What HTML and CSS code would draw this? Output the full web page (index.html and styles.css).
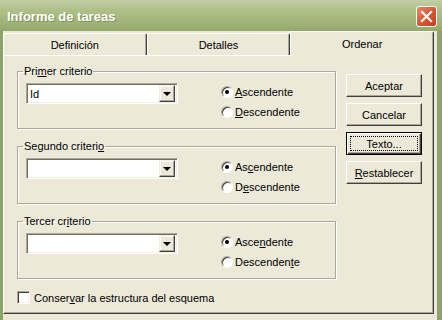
FILE: index.html
```html
<!DOCTYPE html>
<html lang="es">
<head>
  <meta charset="UTF-8" />
  <title>Informe de tareas</title>
  <link rel="stylesheet" href="styles.css">
</head>
<body>
  <div class="window">
    <div class="titlebar">
      <span class="title">Informe de tareas</span>
      <div class="close-btn">
        <svg width="13" height="13" viewBox="0 0 13 13">
          <path d="M2 2 L11 11 M11 2 L2 11" stroke="#fff" stroke-width="2.2" stroke-linecap="square"/>
        </svg>
      </div>
    </div>

    <div class="body">
      <div class="tabs">
        <div class="tab">Definición</div>
        <div class="tab">Detalles</div>
        <div class="tab active">Ordenar</div>
      </div>

      <div class="panel">
        <div class="criteria">
          <fieldset class="group">
            <legend>Pri<u>m</u>er criterio</legend>
            <div class="group-row">
              <div class="combo">
                <span class="combo-text">Id</span>
                <span class="combo-btn"><span class="arrow"></span></span>
              </div>
              <div class="radios">
                <div class="radio"><span class="radio-mark checked"></span><span><u>A</u>scendente</span></div>
                <div class="radio"><span class="radio-mark"></span><span><u>D</u>escendente</span></div>
              </div>
            </div>
          </fieldset>

          <fieldset class="group">
            <legend>Segundo criteri<u>o</u></legend>
            <div class="group-row">
              <div class="combo">
                <span class="combo-text"></span>
                <span class="combo-btn"><span class="arrow"></span></span>
              </div>
              <div class="radios">
                <div class="radio"><span class="radio-mark checked"></span><span>As<u>c</u>endente</span></div>
                <div class="radio"><span class="radio-mark"></span><span>D<u>e</u>scendente</span></div>
              </div>
            </div>
          </fieldset>

          <fieldset class="group">
            <legend>Tercer cr<u>i</u>terio</legend>
            <div class="group-row">
              <div class="combo">
                <span class="combo-text"></span>
                <span class="combo-btn"><span class="arrow"></span></span>
              </div>
              <div class="radios">
                <div class="radio"><span class="radio-mark checked"></span><span>Asce<u>n</u>dente</span></div>
                <div class="radio"><span class="radio-mark"></span><span>Descenden<u>t</u>e</span></div>
              </div>
            </div>
          </fieldset>

          <div class="check-row">
            <span class="checkbox"></span>
            <span>Conser<u>v</u>ar la estructura del esquema</span>
          </div>
        </div>

        <div class="buttons">
          <div class="btn">Aceptar</div>
          <div class="btn">Cancelar</div>
          <div class="btn default"><span class="focus">Texto...</span></div>
          <div class="btn"><u>R</u>establecer</div>
        </div>
      </div>
    </div>
  </div>
</body>
</html>
```

FILE: styles.css
```css
* {
  box-sizing: border-box;
}

body {
  margin: 0;
  font-family: "Liberation Sans", Arial, sans-serif;
  font-size: 11px;
  color: #000;
  background: #ece9d8;
}

.window {
  width: 442px;
  height: 320px;
  display: flex;
  flex-direction: column;
  overflow: hidden;
}

/* title bar */
.titlebar {
  height: 31px;
  flex-shrink: 0;
  display: flex;
  align-items: center;
  justify-content: space-between;
  padding: 0 5px 0 7px;
  background: linear-gradient(#c3cfa6 0%, #b0c08a 30%, #a2b47a 70%, #95a96c 100%);
}

.title {
  color: #fff;
  font-weight: bold;
  font-size: 13px;
  text-shadow: 1px 1px 0 #7d8f57;
  margin-top: 2px;
}

.close-btn {
  width: 21px;
  height: 21px;
  margin-top: 2px;
  border: 1px solid #fff;
  border-radius: 3px;
  background: linear-gradient(135deg, #e8866a, #d8532f 55%, #c4401f);
  display: flex;
  align-items: center;
  justify-content: center;
}

/* window body */
.body {
  flex: 1;
  background: #ece9d8;
  border-left: 3px solid #8ea36b;
  border-right: 5px solid #8ea36b;
  padding-right: 3px;
  display: flex;
  flex-direction: column;
}

.tabs {
  display: flex;
  height: 24px;
  align-items: flex-end;
  position: relative;
  z-index: 1;
}

.tab {
  flex: 1;
  height: 22px;
  text-align: center;
  padding-top: 5px;
  border-top: 1px solid #fff;
  border-left: 1px solid #fff;
  border-right: 1px solid #404040;
  box-shadow: inset -1px 0 0 #aca899;
  border-radius: 2px 2px 0 0;
}

.tab.active {
  height: 25px;
  margin-bottom: -1px;
  padding-top: 6px;
  background: #ece9d8;
}

.panel {
  height: 259px;
  display: flex;
  padding: 8px 0 0 13px;
  border: 1px solid;
  border-color: #fff #404040 #404040 #fff;
  box-shadow: inset -1px -1px 0 #aca899;
}

/* group boxes */
.criteria {
  width: 319px;
  display: flex;
  flex-direction: column;
  gap: 10px;
}

.group {
  margin: 0;
  padding: 4px 8px 5px;
  height: 65px;
  border: 1px solid #aca899;
  box-shadow: 1px 1px 0 #fff, inset 1px 1px 0 #fff;
}

.group legend {
  padding: 0 1px;
  margin-left: -3px;
  line-height: 14px;
}

.group-row {
  display: flex;
  align-items: flex-start;
}

.combo {
  width: 152px;
  height: 21px;
  margin-top: 1px;
  display: flex;
  align-items: center;
  background: #fff;
  border: 1px solid;
  border-color: #aca899 #fff #fff #aca899;
  box-shadow: inset 1px 1px 0 #716f64, inset -1px -1px 0 #f1efe2;
  padding: 0 2px 0 3px;
}

.combo-text {
  flex: 1;
}

.combo-btn {
  width: 16px;
  height: 17px;
  background: #ece9d8;
  border: 1px solid;
  border-color: #f1efe2 #404040 #404040 #f1efe2;
  box-shadow: inset -1px -1px 0 #aca899, inset 1px 1px 0 #fff;
  display: flex;
  align-items: center;
  justify-content: center;
}

.arrow {
  width: 0;
  height: 0;
  border-left: 4px solid transparent;
  border-right: 4px solid transparent;
  border-top: 4px solid #000;
  margin-top: 1px;
}

.radios {
  margin-left: 43px;
  display: flex;
  flex-direction: column;
}

.radio {
  height: 20px;
  display: flex;
  align-items: center;
  gap: 2px;
}

.radio-mark {
  width: 12px;
  height: 12px;
  border-radius: 50%;
  background: #fff;
  border: 1px solid;
  border-color: #aca899 #fff #fff #aca899;
  box-shadow: inset 1px 1px 0 #404040;
  display: flex;
  align-items: center;
  justify-content: center;
}

.radio-mark.checked::after {
  content: "";
  width: 4px;
  height: 4px;
  border-radius: 50%;
  background: #000;
}

.check-row {
  margin-top: 2px;
  display: flex;
  align-items: center;
  gap: 4px;
}

.checkbox {
  width: 13px;
  height: 13px;
  background: #fff;
  border: 1px solid;
  border-color: #aca899 #fff #fff #aca899;
  box-shadow: inset 1px 1px 0 #404040, inset -1px -1px 0 #f1efe2;
}

/* buttons */
.buttons {
  margin: 10px 0 0 10px;
  display: flex;
  flex-direction: column;
  gap: 6px;
}

.btn {
  width: 76px;
  height: 23px;
  display: flex;
  align-items: center;
  justify-content: center;
  border: 1px solid;
  border-color: #fff #404040 #404040 #fff;
  box-shadow: inset -1px -1px 0 #aca899;
}

.btn.default {
  border: 1px solid #000;
  box-shadow: inset 1px 1px 0 #fff, inset -1px -1px 0 #404040, inset -2px -2px 0 #aca899;
  padding: 3px;
}

.focus {
  flex: 1;
  align-self: stretch;
  display: flex;
  align-items: center;
  justify-content: center;
  border: 1px dotted #000;
}
```
